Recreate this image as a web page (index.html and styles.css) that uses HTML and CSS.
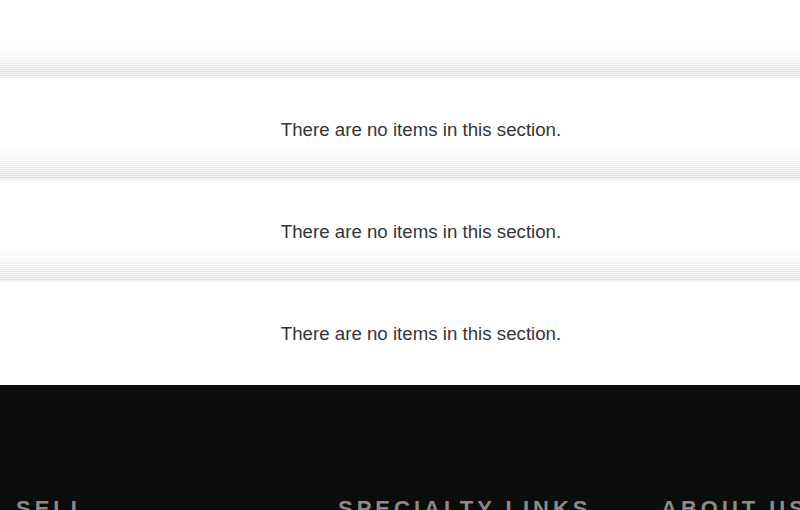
FILE: index.html
```html
<!DOCTYPE html>
<html>
<head>
<meta charset="utf-8">
<link rel="stylesheet" href="styles.css">
</head>
<body>
<main class="sections">
  <section class="section">
    <div class="band"></div>
    <div class="body"><p class="empty">There are no items in this section.</p></div>
  </section>
  <section class="section">
    <div class="band"></div>
    <div class="body"><p class="empty">There are no items in this section.</p></div>
  </section>
  <section class="section last">
    <div class="band"></div>
    <div class="body"><p class="empty">There are no items in this section.</p></div>
  </section>
</main>
<footer class="footer">
  <div class="col"><h3 class="col-title">SELL</h3></div>
  <div class="col"><h3 class="col-title">SPECIALTY LINKS</h3></div>
  <div class="col"><h3 class="col-title">ABOUT US</h3></div>
</footer>
</body>
</html>
```

FILE: styles.css
```css
html, body {
  margin: 0;
  padding: 0;
  background: #fff;
  overflow: hidden;
}
body {
  font-family: "Liberation Sans", Arial, sans-serif;
  width: 800px;
  height: 510px;
}
.sections {
  padding-top: 44px;
}
.band {
  height: 34px;
  background:
    linear-gradient(to bottom, rgba(255,255,255,1) 0%, rgba(255,255,255,0.8) 30%, rgba(255,255,255,0) 100%),
    repeating-linear-gradient(to bottom, #f4f4f4 0px, #f4f4f4 1px, #dcdcdc 1px, #dcdcdc 2px);
  border-bottom: 1px solid #eeeeee;
  box-sizing: border-box;
}
.body {
  height: 68px;
  box-sizing: border-box;
  padding: 41px 0 0 42px;
}
.section.last .body {
  height: 103px;
}
.empty {
  margin: 0;
  text-align: center;
  font-size: 18.7px;
  line-height: 21px;
  color: #34353a;
}
.footer {
  background: #0b0d0c;
  height: 125px;
  display: grid;
  grid-template-columns: 322px 323px 155px;
  padding-top: 111px;
  box-sizing: border-box;
}
.col {
  padding-left: 16px;
}
.col-title {
  margin: 0;
  font-family: "Liberation Sans", Arial, sans-serif;
  font-weight: bold;
  font-size: 22px;
  line-height: 26px;
  letter-spacing: 4px;
  color: #8a8a8a;
  white-space: nowrap;
}
```
